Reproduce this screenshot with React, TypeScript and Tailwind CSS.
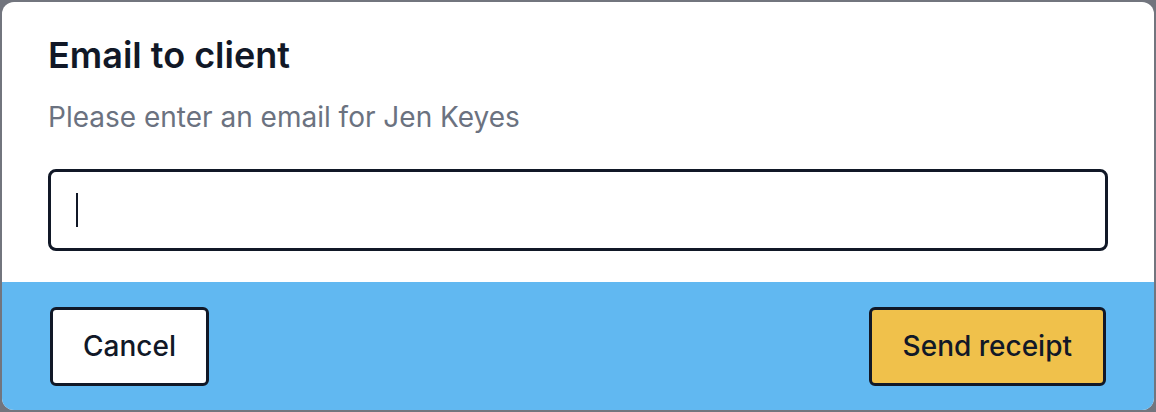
import React from 'react';

export default function App() {
  return (
    <div className="w-[1156px] h-[412px] bg-[#72757e] p-[2px] font-['Inter','Liberation_Sans',sans-serif]">
      <div className="h-full w-full rounded-xl overflow-hidden bg-white flex flex-col">
        <div className="px-[46px] pt-[33px] pb-[31px]">
          <h2 className="text-[36px] leading-10 font-semibold text-[#111827]">Email to client</h2>
          <p className="mt-[24px] text-[28px] leading-9 text-[#6b7280]">Please enter an email for Jen Keyes</p>
          <div className="mt-[34px] h-[82px] rounded-lg border-[3px] border-[#111827] flex items-center pl-[25px]">
            <div className="w-[2px] h-[34px] bg-[#111827]" />
          </div>
        </div>
        <div className="flex-1 bg-[#61b8f1] px-12 flex items-center justify-between">
          <button className="h-[79px] px-[30px] rounded-md border-[3px] border-[#111827] bg-white text-[28px] font-medium text-[#111827]">
            Cancel
          </button>
          <button className="h-[79px] px-[31px] rounded-md border-[3px] border-[#111827] bg-[#f0c14b] text-[28px] font-medium text-[#111827]">
            Send receipt
          </button>
        </div>
      </div>
    </div>
  );
}
